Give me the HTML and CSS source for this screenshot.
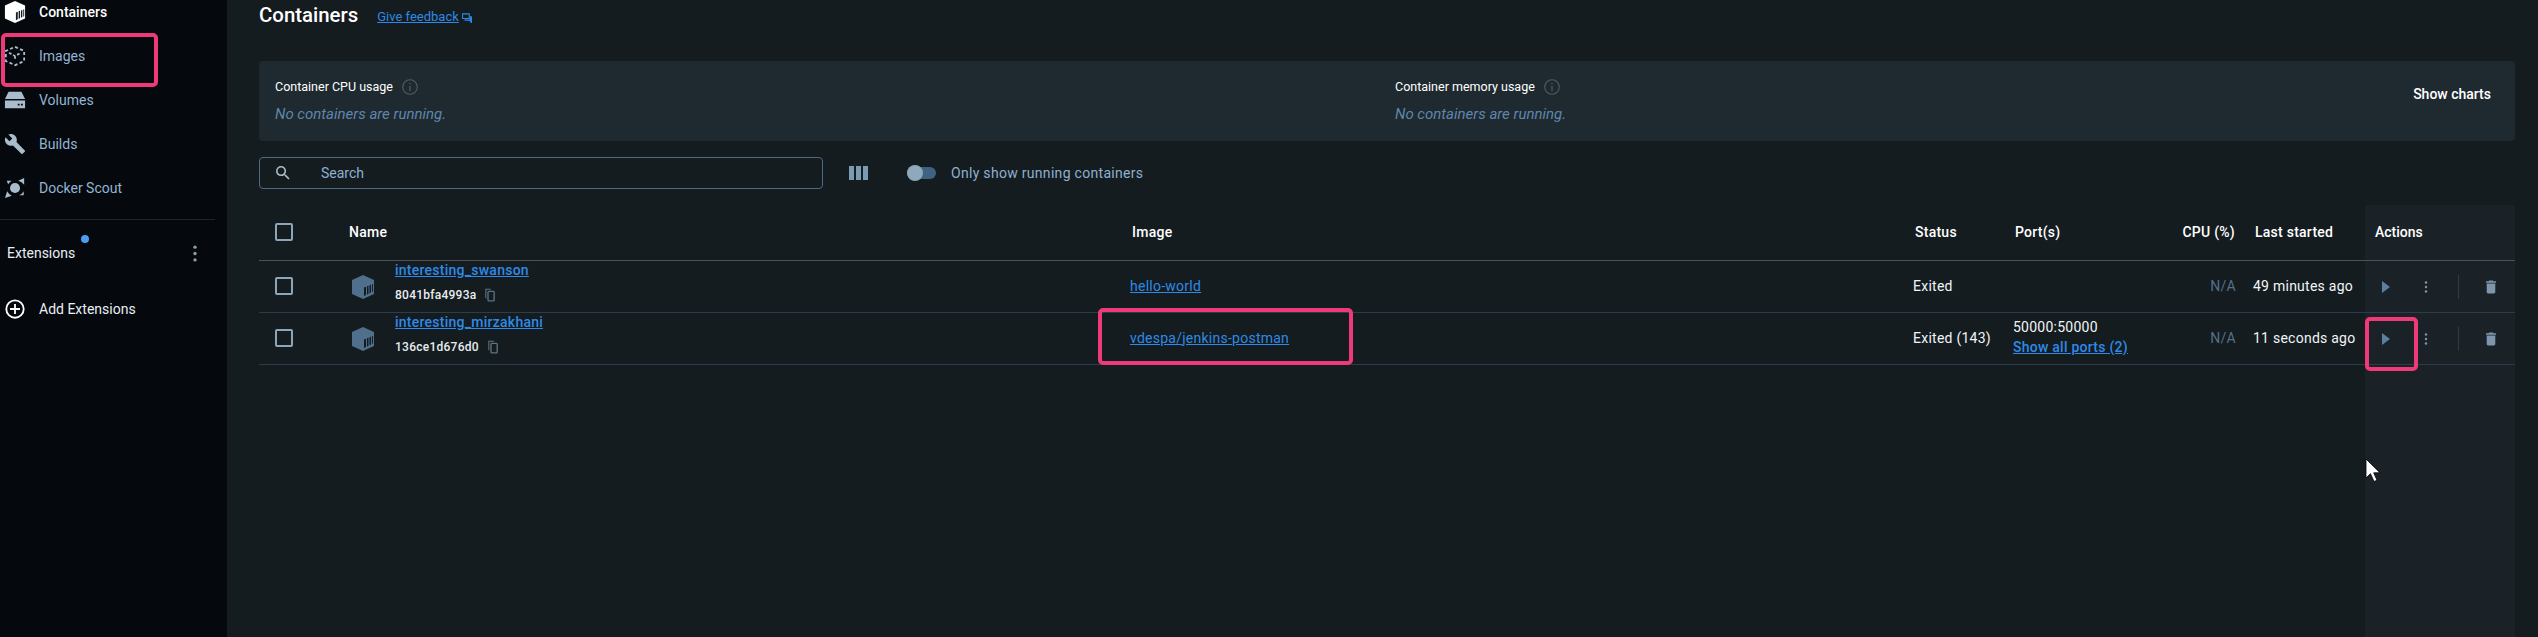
FILE: index.html
```html
<!DOCTYPE html>
<html lang="en">
<head>
    <meta charset="UTF-8">
    <title>Containers</title>
    <link rel="stylesheet" href="styles.css">
</head>
<body>
    <svg class="defs" width="0" height="0">
        <symbol id="box" viewBox="0 0 24 24">
            <path d="M12 0 23 5v14l-11 5L1 19V5z" fill="currentColor"/>
            <path d="M13 12.500l2-.8V20l-2 .9zM16 11.300l1.500-.6v8l-1.500.7zM18.500 10.300l1.500-.6v7.800l-1.500.7zM21 9.300l1-.4v7.700l-1 .5z" fill="#141c20"/>
        </symbol>
        <symbol id="copy" viewBox="0 0 12 16">
            <path d="M1 12V1h6" fill="none" stroke="currentColor" stroke-width="1.300"/>
            <rect x="3.600" y="3.600" width="7.400" height="11.400" rx="1" fill="none" stroke="currentColor" stroke-width="1.600"/>
        </symbol>
        <symbol id="info" viewBox="0 0 16 16">
            <circle cx="8" cy="8" r="7.300" fill="none" stroke="currentColor" stroke-width="1.100"/>
            <path d="M7.400 7h1.200v5H7.400zM7.400 4h1.200v1.300H7.400z" fill="currentColor"/>
        </symbol>
        <symbol id="play" viewBox="0 0 8 12">
            <path d="M0 0l8 6-8 6z" fill="currentColor"/>
        </symbol>
        <symbol id="dots" viewBox="0 0 4 12">
            <circle cx="2" cy="1.500" r="1.200" fill="currentColor"/>
            <circle cx="2" cy="6" r="1.200" fill="currentColor"/>
            <circle cx="2" cy="10.500" r="1.200" fill="currentColor"/>
        </symbol>
        <symbol id="trash" viewBox="5 3 14 18">
            <path d="M6 19c0 1.100.9 2 2 2h8c1.100 0 2-.9 2-2V7H6v12zM19 4h-3.500l-1-1h-5l-1 1H5v2h14V4z" fill="currentColor"/>
        </symbol>
    </svg>

    <div class="app">
        <aside class="sidebar">
            <nav class="nav">
                <a class="nav-item active">
                    <svg class="nav-icon"><use href="#box"/></svg>
                    Containers
                </a>
                <a class="nav-item">
                    <svg class="nav-icon" viewBox="0 0 24 24">
                        <path d="M12 2 22 6.500v11L12 22 2 17.500v-11z" fill="none" stroke="currentColor" stroke-width="2" stroke-dasharray="3.500 2.500"/>
                        <path d="M5.500 8.500 12 12l6.500-3.500M12 12v5" fill="none" stroke="currentColor" stroke-width="2" stroke-dasharray="3 2"/>
                    </svg>
                    Images
                </a>
                <a class="nav-item">
                    <svg class="nav-icon" viewBox="0 0 24 24">
                        <path d="M5 3h14l4 8H1z" fill="currentColor"/>
                        <path d="M1 12.500h22V21H1z" fill="currentColor"/>
                        <path d="M15 16h2v2h-2zM18.500 16h2v2h-2z" fill="#05080c"/>
                    </svg>
                    Volumes
                </a>
                <a class="nav-item">
                    <svg class="nav-icon" viewBox="0 0 24 24">
                        <path d="M22.700 19l-9.100-9.100c.9-2.300.4-5-1.500-6.900-2-2-5-2.400-7.400-1.300L9 6 6 9 1.600 4.700C.4 7.100.9 10.100 2.900 12.100c1.900 1.900 4.600 2.400 6.900 1.500l9.100 9.100c.4.4 1 .4 1.400 0l2.300-2.300c.5-.4.5-1.100.1-1.400z" fill="currentColor"/>
                    </svg>
                    Builds
                </a>
                <a class="nav-item">
                    <svg class="nav-icon" viewBox="0 0 24 24">
                        <circle cx="12" cy="12" r="5.500" fill="currentColor"/>
                        <path d="M3 4h5.500A11 11 0 0 0 4.500 8zM22 1v7.500A11 11 0 0 0 15.500 4zM1 23l2.500-7.500A11 11 0 0 0 8.500 20.500zM21.500 15.500V20h-5A11 11 0 0 0 21.500 15.500z" fill="currentColor"/>
                    </svg>
                    Docker Scout
                </a>
            </nav>
            <div class="extensions">
                <span class="extensions-label">Extensions<span class="badge"></span></span>
                <svg class="ext-dots"><use href="#dots"/></svg>
            </div>
            <a class="nav-item add">
                <svg class="nav-icon" viewBox="0 0 24 24">
                    <circle cx="12" cy="12" r="9.500" fill="none" stroke="currentColor" stroke-width="2"/>
                    <path d="M11 6.500h2V11h4.500v2H13v4.500h-2V13H6.500v-2H11z" fill="currentColor"/>
                </svg>
                Add Extensions
            </a>
        </aside>

        <main class="main">
            <div class="title-row">
                <h1 class="title">Containers</h1>
                <a class="feedback">Give feedback</a>
                <svg class="feedback-icon" viewBox="0 0 12 12">
                    <path d="M.7 1h8v5.500H.7z" fill="none" stroke="currentColor" stroke-width="1.300"/>
                    <path d="M3 8.500h7V4M11.300 4v7.500L9 8.500" fill="none" stroke="currentColor" stroke-width="1.300"/>
                </svg>
            </div>

            <section class="stats">
                <div class="stat stat-cpu">
                    <div class="stat-head">Container CPU usage <svg class="info"><use href="#info"/></svg></div>
                    <div class="stat-note">No containers are running.</div>
                </div>
                <div class="stat stat-mem">
                    <div class="stat-head">Container memory usage <svg class="info"><use href="#info"/></svg></div>
                    <div class="stat-note">No containers are running.</div>
                </div>
                <div class="show-charts">Show charts</div>
            </section>

            <div class="toolbar">
                <div class="search">
                    <svg class="search-icon" viewBox="3 3 18 18">
                        <path d="M15.500 14h-.79l-.28-.27A6.470 6.470 0 0 0 16 9.500 6.500 6.500 0 1 0 9.500 16c1.610 0 3.090-.59 4.230-1.570l.27.28v.79l5 4.990L20.490 19l-4.990-5zm-6 0C7.010 14 5 11.990 5 9.500S7.010 5 9.500 5 14 7.010 14 9.500 11.990 14 9.500 14z" fill="currentColor"/>
                    </svg>
                    <span>Search</span>
                </div>
                <div class="columns-icon"><span></span><span></span><span></span></div>
                <div class="toggle"><span class="toggle-thumb"></span></div>
                <span class="toggle-label">Only show running containers</span>
            </div>

            <div class="table">
                <div class="table-cols">
                    <div class="row head">
                        <span class="check"></span>
                        <span>Name</span>
                        <span>Image</span>
                        <span>Status</span>
                        <span>Port(s)</span>
                        <span class="right">CPU (%)</span>
                        <span>Last started</span>
                    </div>
                    <div class="row">
                        <span class="check"></span>
                        <div class="name-cell">
                            <svg class="box-icon"><use href="#box"/></svg>
                            <div class="name-text">
                                <a class="link strong">interesting_swanson</a>
                                <div class="id">8041bfa4993a <svg class="copy"><use href="#copy"/></svg></div>
                            </div>
                        </div>
                        <a class="link">hello-world</a>
                        <span>Exited</span>
                        <span></span>
                        <span class="right muted">N/A</span>
                        <span>49 minutes ago</span>
                    </div>
                    <div class="row">
                        <span class="check"></span>
                        <div class="name-cell">
                            <svg class="box-icon"><use href="#box"/></svg>
                            <div class="name-text">
                                <a class="link strong">interesting_mirzakhani</a>
                                <div class="id">136ce1d676d0 <svg class="copy"><use href="#copy"/></svg></div>
                            </div>
                        </div>
                        <a class="link">vdespa/jenkins-postman</a>
                        <span>Exited (143)</span>
                        <div class="ports">
                            <span>50000:50000</span>
                            <a class="link strong">Show all ports (2)</a>
                        </div>
                        <span class="right muted">N/A</span>
                        <span>11 seconds ago</span>
                    </div>
                </div>
                <div class="actions-col">
                    <div class="actions-head">Actions</div>
                    <div class="actions-row">
                        <svg class="play"><use href="#play"/></svg>
                        <svg class="dots"><use href="#dots"/></svg>
                        <span class="sep"></span>
                        <svg class="trash"><use href="#trash"/></svg>
                    </div>
                    <div class="actions-row">
                        <svg class="play"><use href="#play"/></svg>
                        <svg class="dots"><use href="#dots"/></svg>
                        <span class="sep"></span>
                        <svg class="trash"><use href="#trash"/></svg>
                    </div>
                </div>
            </div>
        </main>
    </div>

    <!-- annotations drawn over the screenshot -->
    <div class="mark mark-images"></div>
    <div class="mark mark-image"></div>
    <div class="mark mark-play"></div>
    <svg class="cursor" viewBox="0 0 17 25">
        <path d="M1 1v19l4.500-4.300L9 23.500l3-1.300-3.300-7.400H15z" fill="#fff" stroke="#000" stroke-width=".8"/>
    </svg>
</body>
</html>
```

FILE: styles.css
```css
* {
    box-sizing: border-box;
}
html, body {
    height: 100%;
}
body {
    margin: 0;
    overflow: hidden;
    background: #141c20;
    color: #fff;
    font-family: Roboto, "Liberation Sans", sans-serif;
    font-size: 14px;
    line-height: 16px;
}
.defs {
    position: absolute;
}
.app {
    display: flex;
    height: 100%;
}

/* sidebar */
.sidebar {
    width: 227px;
    flex-shrink: 0;
    background: #05080c;
    overflow: hidden;
}
.nav {
    margin-top: -10px;
    padding-bottom: 9px;
    margin-right: 12px;
    border-bottom: 1px solid #1f262b;
}
.nav-item {
    display: flex;
    align-items: center;
    height: 44px;
    padding-left: 4px;
    color: #94b4d4;
    font-size: 14px;
}
.nav-item.active {
    color: #fff;
    font-weight: 500;
}
.nav-icon {
    width: 22px;
    height: 22px;
    margin-right: 13px;
    color: #a9bccb;
}
.active .nav-icon {
    color: #fff;
}
.extensions {
    display: flex;
    align-items: center;
    justify-content: space-between;
    height: 32px;
    margin-top: 17px;
    padding: 0 29px 0 7px;
    font-size: 14px;
}
.extensions-label {
    position: relative;
    color: #e8eff5;
}
.badge {
    position: absolute;
    left: 74px;
    top: -10px;
    width: 8px;
    height: 8px;
    border-radius: 50%;
    background: #4a9df0;
}
.ext-dots {
    width: 6px;
    height: 17px;
    color: #8b9aa6;
}
.nav-item.add {
    margin-top: 18px;
    color: #e8eff5;
}
.add .nav-icon {
    color: #fff;
}

/* main */
.main {
    flex: 1;
    min-width: 0;
    height: 100%;
    display: flex;
    flex-direction: column;
    padding: 3px 23px 0 32px;
}
.title-row {
    display: flex;
    align-items: center;
    height: 24px;
}
.title {
    margin: 0;
    font-size: 20.400px;
    font-weight: 500;
    line-height: 24px;
}
.feedback {
    margin-left: 19px;
    margin-top: 3px;
    color: #2e8ae6;
    font-size: 13px;
    text-decoration: underline;
}
.feedback-icon {
    width: 10px;
    height: 10px;
    margin: 5px 0 0 3px;
    color: #2e8ae6;
}
.stats {
    display: flex;
    align-items: flex-start;
    height: 80px;
    margin-top: 34px;
    padding: 17px 24px 0 16px;
    background: #1e2a30;
    border-radius: 4px;
}
.stat-cpu {
    width: 1120px;
}
.stat-mem {
    flex: 1;
}
.stat-head {
    display: flex;
    align-items: center;
    height: 18px;
    font-size: 12.500px;
}
.info {
    width: 16px;
    height: 16px;
    margin-left: 9px;
    color: #515c63;
}
.stat-note {
    margin-top: 10px;
    color: #5f86ab;
    font-size: 15px;
    font-style: italic;
}
.show-charts {
    margin-top: 8px;
    font-weight: 500;
    font-size: 14px;
}
.toolbar {
    display: flex;
    align-items: center;
    height: 32px;
    margin-top: 16px;
}
.search {
    display: flex;
    align-items: center;
    width: 564px;
    height: 32px;
    padding-left: 16px;
    border: 1px solid #4a6a86;
    border-radius: 4px;
    color: #8fb0cf;
}
.search-icon {
    width: 14px;
    height: 14px;
    margin-right: 31px;
    color: #a9bccb;
}
.columns-icon {
    display: flex;
    gap: 2px;
    margin-left: 26px;
}
.columns-icon span {
    width: 5px;
    height: 14px;
    background: #7d9ab3;
}
.toggle {
    position: relative;
    width: 29px;
    height: 12px;
    margin-left: 39px;
    border-radius: 6px;
    background: #3f6283;
}
.toggle-thumb {
    position: absolute;
    left: 0;
    top: -2px;
    width: 16px;
    height: 16px;
    border-radius: 50%;
    background: #8fa9bc;
}
.toggle-label {
    margin-left: 15px;
    color: #8fb0cf;
    letter-spacing: .3px;
}

/* table */
.table {
    flex: 1;
    display: flex;
    margin-top: 16px;
}
.table-cols {
    flex: 1;
    min-width: 0;
}
.row {
    display: grid;
    grid-template-columns: 74px 781px 783px 100px 150px 73px 1fr;
    align-items: center;
    height: 52px;
    padding: 0 0 2px 16px;
    border-bottom: 1px solid #2b3d4d;
    color: #f2f5f7;
    letter-spacing: .25px;
}
.row > :nth-child(7) {
    padding-left: 17px;
    white-space: nowrap;
}
.row.head {
    height: 56px;
    border-bottom-color: #4d5254;
    color: #fff;
    font-weight: 500;
}
.row.head > span {
    padding-left: 2px;
}
.row.head > :nth-child(2) {
    padding-left: 0;
}
.row.head > :nth-child(7) {
    padding-left: 19px;
}
.row.head > .right {
    padding-right: 1px;
}
.row.head > .check {
    padding-left: 0;
}
.check {
    width: 18px;
    height: 18px;
    margin-top: 1px;
    border: 2px solid #8ba6b8;
    border-radius: 2px;
}
.right {
    text-align: right;
}
.muted {
    color: #56708a;
}
.link {
    color: #2e8ae6;
    text-decoration: underline;
}
.strong {
    font-weight: 500;
}
.name-cell {
    display: flex;
    align-items: center;
    align-self: stretch;
    padding-left: 2px;
}
.box-icon {
    width: 24px;
    height: 24px;
    margin: 2px 20px 0 0;
    color: #4f6f8c;
}
.name-text {
    display: flex;
    flex-direction: column;
    align-self: flex-start;
    gap: 9px;
    margin-top: 1px;
    white-space: nowrap;
}
.id {
    display: flex;
    align-items: center;
    font-size: 12px;
    font-weight: 500;
    color: #e8ecef;
}
.copy {
    width: 10px;
    height: 14px;
    margin-left: 9px;
    color: #5f7283;
}
.ports {
    display: flex;
    flex-direction: column;
    line-height: 20px;
    margin-top: -1px;
}

/* actions column */
.actions-col {
    width: 150px;
    flex-shrink: 0;
    background: #1a2228;
}
.actions-head {
    display: flex;
    align-items: center;
    height: 56px;
    padding: 0 0 1px 10px;
    border-bottom: 1px solid #4d5254;
    font-weight: 500;
}
.actions-row {
    display: flex;
    align-items: center;
    height: 52px;
    padding-left: 17px;
    border-bottom: 1px solid #2b3d4d;
}
.play {
    width: 8px;
    height: 12px;
    color: #5d7f9d;
}
.dots {
    width: 4px;
    height: 12px;
    margin-left: 34px;
    color: #7d96ab;
}
.sep {
    width: 1px;
    height: 24px;
    margin-left: 30px;
    background: #2b3d4d;
}
.trash {
    width: 10px;
    height: 14px;
    margin-left: 27px;
    color: #7d96ab;
}

/* annotations */
.mark {
    position: absolute;
    border: 4px solid #ee3a78;
    border-radius: 5px;
}
.mark-images {
    left: 1px;
    top: 33px;
    width: 157px;
    height: 54px;
}
.mark-image {
    left: 1098px;
    top: 308px;
    width: 255px;
    height: 57px;
}
.mark-play {
    left: 2365px;
    top: 317px;
    width: 53px;
    height: 54px;
}
.cursor {
    position: absolute;
    left: 2365px;
    top: 458px;
    width: 17px;
    height: 25px;
}
```
